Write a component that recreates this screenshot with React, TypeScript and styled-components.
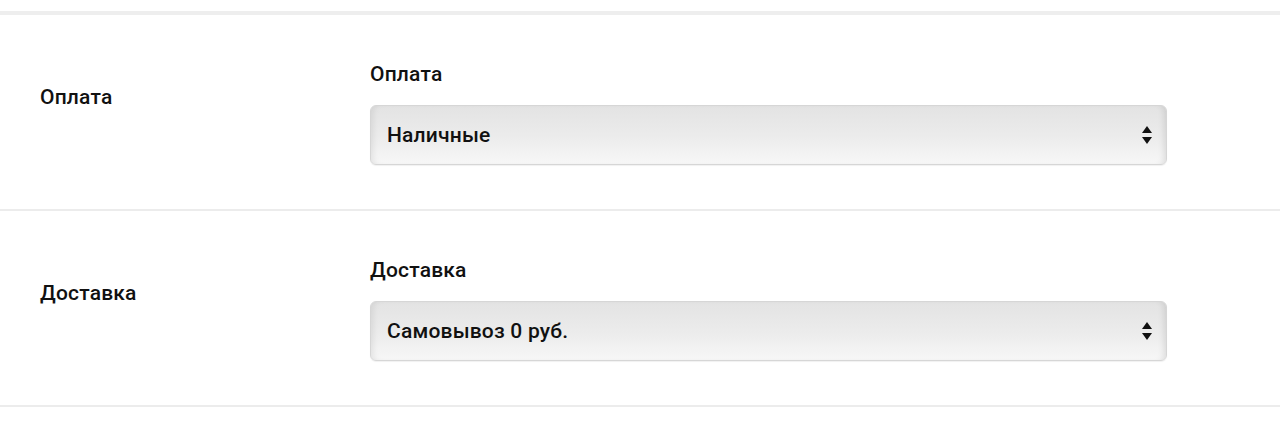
import React from 'react';
import styled, { createGlobalStyle } from 'styled-components';

const GlobalStyle = createGlobalStyle`
  html, body {
    margin: 0;
    padding: 0;
    background: #fff;
  }
  body {
    font-family: Roboto, 'Liberation Sans', sans-serif;
    font-weight: 500;
    letter-spacing: 0.2px;
    color: #111;
  }
`;

const TopBand = styled.div`
  margin-top: 11px;
  height: 4px;
  background: #eeeeee;
`;

const Row = styled.div`
  display: grid;
  grid-template-columns: 330px 797px;
  padding: 47px 0 44px 40px;
  border-bottom: 2px solid #ececec;
`;

const SideLabel = styled.div`
  font-size: 21px;
  line-height: 24px;
  margin-top: 23px;
`;

const Field = styled.div`
  display: flex;
  flex-direction: column;
  gap: 19px;
`;

const FieldLabel = styled.div`
  font-size: 21px;
  line-height: 24px;
`;

const SelectBox = styled.div`
  position: relative;
  height: 58px;
  border: 1px solid #d6d6d6;
  border-radius: 6px;
  background: linear-gradient(to bottom, #e3e3e3 0%, #ececec 55%, #f7f7f7 100%);
  box-shadow: inset 6px 0 6px -4px rgba(0, 0, 0, 0.08), inset -6px 0 6px -4px rgba(0, 0, 0, 0.1),
    0 1px 1px rgba(0, 0, 0, 0.06);
  display: flex;
  align-items: center;
  padding: 0 16px;
  font-size: 21px;
`;

const Arrows = styled.svg`
  position: absolute;
  right: 14px;
  top: 50%;
  transform: translateY(-50%);
`;

type SelectProps = { value: string };

const Select = ({ value }: SelectProps) => (
  <SelectBox>
    {value}
    <Arrows width="10" height="20" viewBox="0 0 10 20">
      <polygon points="5,1 10,8 0,8" fill="#111" />
      <polygon points="0,12 10,12 5,19" fill="#111" />
    </Arrows>
  </SelectBox>
);

const rows = [
  { label: 'Оплата', value: 'Наличные' },
  { label: 'Доставка', value: 'Самовывоз 0 руб.' },
];

export default function App() {
  return (
    <>
      <GlobalStyle />
      <TopBand />
      {rows.map((r) => (
        <Row key={r.label}>
          <SideLabel>{r.label}</SideLabel>
          <Field>
            <FieldLabel>{r.label}</FieldLabel>
            <Select value={r.value} />
          </Field>
        </Row>
      ))}
    </>
  );
}
